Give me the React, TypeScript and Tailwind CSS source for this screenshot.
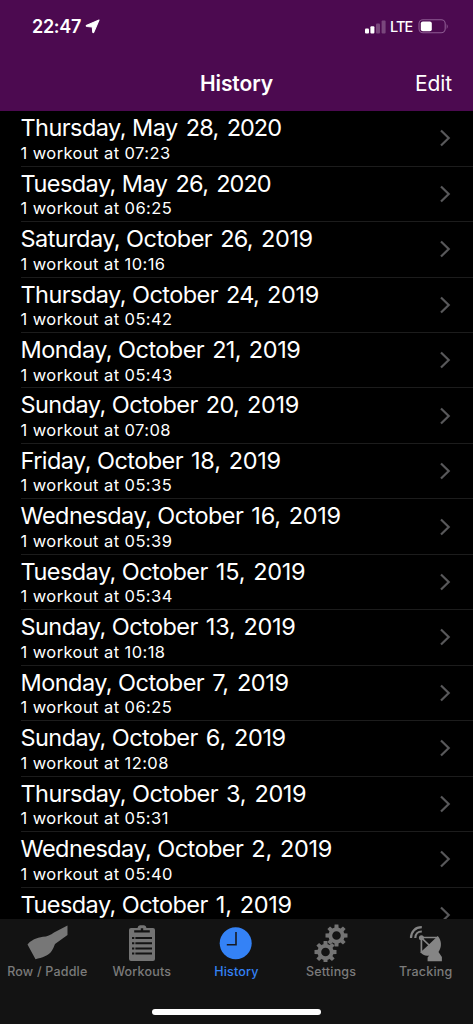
import React from "react";

const workouts: [string, string, string, string?][] = [
  ["Thursday, May", "28,", "2020", "07:23"],
  ["Tuesday, May", "26,", "2020", "06:25"],
  ["Saturday, October", "26,", "2019", "10:16"],
  ["Thursday, October", "24,", "2019", "05:42"],
  ["Monday, October", "21,", "2019", "05:43"],
  ["Sunday, October", "20,", "2019", "07:08"],
  ["Friday, October", "18,", "2019", "05:35"],
  ["Wednesday, October", "16,", "2019", "05:39"],
  ["Tuesday, October", "15,", "2019", "05:34"],
  ["Sunday, October", "13,", "2019", "10:18"],
  ["Monday, October", "7,", "2019", "06:25"],
  ["Sunday, October", "6,", "2019", "12:08"],
  ["Thursday, October", "3,", "2019", "05:31"],
  ["Wednesday, October", "2,", "2019", "05:40"],
  ["Tuesday, October", "1,", "2019"],
];

function StatusBar() {
  return (
    <div className="flex h-[55px] items-start justify-between pt-[14px] pr-[24px] pl-[32px]">
      <div className="flex items-center gap-[4px]">
        <span className="text-[18px] leading-[25px] font-semibold tracking-[-0.3px]">22:47</span>
        <svg className="h-[15px] w-[15px]" viewBox="0 0 14 14" fill="white">
          <path d="M13.1 1 8.3 12.2Q7.6 13.6 7.2 12.2L6.8 7.4 1.9 7Q.4 6.6 1.7 5.9Z" stroke="white" strokeWidth="1" strokeLinejoin="round" />
        </svg>
      </div>
      <div className="flex h-[25px] items-center">
        <svg className="h-[14px] w-[22px]" viewBox="0 0 22 14" fill="white">
          <rect x="0" y="8.5" width="4" height="5" rx="1" />
          <rect x="5.4" y="6.2" width="4" height="7.3" rx="1" />
          <rect x="11" y="3.5" width="4" height="10" rx="1" opacity=".25" />
          <rect x="16.6" y=".5" width="4" height="13" rx="1" opacity=".25" />
        </svg>
        <span className="ml-[3px] w-[28px] text-[14.5px] leading-[25px] font-medium tracking-[-0.9px]">LTE</span>
        <svg className="h-[15px] w-[31px]" viewBox="0 0 31 15">
          <rect x="1" y=".8" width="26.2" height="13" rx="4" fill="none" stroke="#8d5b92" strokeWidth="1.1" />
          <rect x="2.8" y="2.6" width="11" height="9.6" rx="2" fill="white" />
          <path d="M28.7 5v5q2-2.5 0-5" fill="#8d5b92" />
        </svg>
      </div>
    </div>
  );
}

function PaddleIcon() {
  return (
    <svg className="h-[38px] w-[42px]" viewBox="0 0 42 38" fill="#777">
      <path d="M1.5 20.5Q7 14 17 12.8Q23 12.4 28 8.5L41.5 1.5V11L29 20Q27.5 24 26 26.5C22.5 32 16 33.5 9.5 35.2Z" />
    </svg>
  );
}

function ClipboardIcon() {
  return (
    <svg className="h-[38px] w-[28px]" viewBox="0 0 28 38">
      <path d="M3 4H9.5Q10 1.2 12 1.2H16Q18 1.2 18.5 4H25Q27 4 27 6V35Q27 37 25 37H3Q1 37 1 35V6Q1 4 3 4Z" fill="#737373" />
      <path d="M6.2 6.2H12.8V4.2H15.2V6.2H21.8V8.5H6.2Z" fill="#131313" />
      <path d="M7.4 14.1H24M7.4 19.2H24M7.4 24.4H24M7.4 29.5H24" stroke="#131313" strokeWidth="2" />
      <path d="M4 14.1H6.3M4 19.2H6.3M4 24.4H6.3M4 29.5H6.3" stroke="#131313" strokeWidth="2" />
    </svg>
  );
}

function ClockIcon() {
  return (
    <svg className="h-[38px] w-[34px]" viewBox="0 0 34 38">
      <circle cx="16.7" cy="19.3" r="16" fill="#3482f6" />
      <path d="M17 8V20.7H7.8" fill="none" stroke="#171b24" strokeWidth="1.6" />
    </svg>
  );
}

const teeth = [0, 45, 90, 135, 180, 225, 270, 315];

function Gear({ x, y }: { x: number; y: number }) {
  return (
    <g transform={`translate(${x} ${y})`}>
      {teeth.map((a) => (
        <path key={a} d="M-1.9-11H1.9L2.2-6H-2.2Z" fill="#737373" transform={`rotate(${a})`} />
      ))}
      <circle r="6.2" fill="none" stroke="#737373" strokeWidth="3.8" />
    </g>
  );
}

function GearsIcon() {
  return (
    <svg className="h-[38px] w-[34px]" viewBox="0 0 34 38">
      <Gear x={22.5} y={11.5} />
      <Gear x={11.5} y={28} />
    </svg>
  );
}

function DishIcon() {
  return (
    <svg className="h-[38px] w-[34px]" viewBox="0 0 34 38">
      <path d="M2 14C2 7.5 6.3 3.2 12.8 3.2M6.3 14C6.3 10 9 7.5 12.8 7.5" fill="none" stroke="#858585" strokeWidth="2.2" />
      <circle cx="12.4" cy="13.8" r="2.5" fill="#858585" />
      <path d="M12.4 13.5H29M12.4 13.8V29M12.8 14.2 21 22" fill="none" stroke="#858585" strokeWidth="1.7" />
      <path d="M28.8 12C32.8 16.5 33 23 29.5 28L32.9 33V37.2H18.6V33.5L20.2 31.5C16.5 32.2 13.5 31 11.5 28.3L17.8 22.6Z" fill="#858585" />
    </svg>
  );
}

const tabs = [
  { label: "Row / Paddle", icon: <PaddleIcon /> },
  { label: "Workouts", icon: <ClipboardIcon /> },
  { label: "History", icon: <ClockIcon />, active: true },
  { label: "Settings", icon: <GearsIcon /> },
  { label: "Tracking", icon: <DishIcon /> },
];

export default function App() {
  return (
    <div className="flex h-[1024px] w-[473px] flex-col overflow-hidden bg-black font-['Inter',sans-serif] text-white">
      <header className="h-[111px] shrink-0 bg-[#4c0a50]">
        <StatusBar />
        <div className="grid h-[58px] grid-cols-3 items-center pr-[21px] pl-[21px]">
          <span />
          <h1 className="text-center text-[21px] font-semibold tracking-[-0.1px]">History</h1>
          <button className="text-right text-[21px] tracking-[-0.1px]">Edit</button>
        </div>
      </header>
      <main className="min-h-0 flex-1 overflow-hidden pt-[0.2px]">
        {workouts.map(([day, num, year, time]) => (
          <div key={day + num} className="flex h-[55.46px] pl-[20.5px]">
            <div className="flex h-full flex-1 items-center justify-between border-b border-[#1c1c1c] pr-[22px]">
              <div className="h-full whitespace-nowrap pt-[3px]">
                <div className="flex gap-[8px] text-[23.5px] leading-[27.5px]">
                  <span className="tracking-[-0.55px]">{day}</span>
                  <span className={num.startsWith("2") && num.length === 3 ? "tracking-[-0.7px]" : "tracking-[-0.2px]"}>{num}</span>
                  <span className={year === "2020" ? "tracking-[-1px]" : "tracking-[-0.35px]"}>{year}</span>
                </div>
                {time && <div className="text-[16.5px] leading-[22px] tracking-[0.42px]">1 workout at {time}</div>}
              </div>
              <svg className="h-[18px] w-[12px]" viewBox="0 0 12 18">
                <path d="M2 1.5 9.7 9 2 16.5" fill="none" stroke="#58585a" strokeWidth="2.2" />
              </svg>
            </div>
          </div>
        ))}
      </main>
      <nav className="flex h-[105px] shrink-0 flex-col items-center justify-between bg-[#131313] pb-[9px]">
        <div className="grid w-full grid-cols-5 pt-[5px]">
          {tabs.map((t) => (
            <div key={t.label} className={t.active ? "flex flex-col items-center text-[#3482f6]" : "flex flex-col items-center text-[#7b7b7b]"}>
              {t.icon}
              <span className="mt-[2px] text-[12.5px] leading-[16px] font-medium tracking-[0.2px] whitespace-nowrap">{t.label}</span>
            </div>
          ))}
        </div>
        <div className="h-[6px] w-[169px] rounded-full bg-white" />
      </nav>
    </div>
  );
}
